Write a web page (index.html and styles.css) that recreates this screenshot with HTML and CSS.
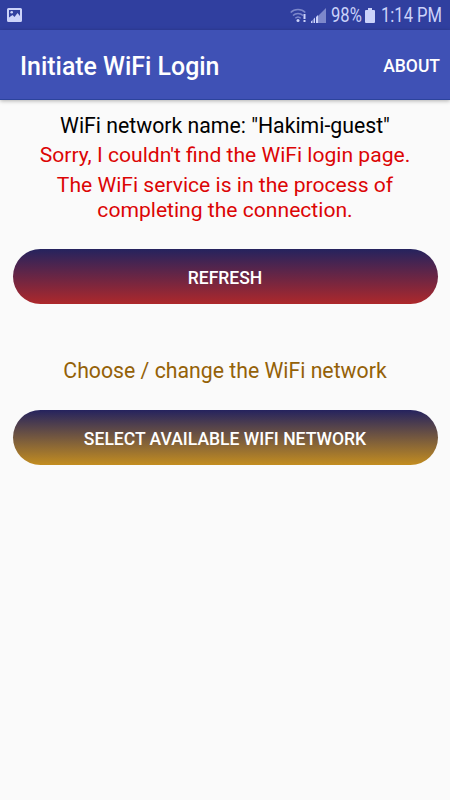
FILE: index.html
```html
<!DOCTYPE html>
<html lang="en">
<head>
    <meta charset="UTF-8">
    <meta name="viewport" content="width=device-width, initial-scale=1.0">
    <title>Initiate WiFi Login</title>
    <link rel="stylesheet" href="styles.css">
</head>
<body>
    <div class="status-bar">
        <svg class="picture-icon" width="15" height="14" viewBox="0 0 15 14">
            <path fill-rule="evenodd" d="M1.5 0h12A1.5 1.5 0 0 1 15 1.5v11a1.5 1.5 0 0 1-1.5 1.5h-12A1.5 1.5 0 0 1 0 12.5v-11A1.5 1.5 0 0 1 1.5 0zM2 2v7.5l3.5-2.5 2 2 3-4 2.5 3V2z"/>
            <circle cx="4.7" cy="4.3" r="1.3"/>
        </svg>
        <div class="status-icons">
            <svg class="wifi-icon" width="17" height="15" viewBox="0 0 17 15">
                <g class="wifi-waves">
                    <path d="M0.7 4.5C4.5 0.5 11.5 0.5 15.3 4.5"/>
                    <path d="M3 7.5c2.7-2.8 7.3-2.8 10 0"/>
                    <path d="M5.3 10.3c1.6-1.5 3.8-1.5 5.4 0"/>
                </g>
                <circle cx="8" cy="12.5" r="1.5"/>
                <path d="M13.5 6h2v5h-2zM13.5 12h2v2h-2z"/>
            </svg>
            <svg class="signal-icon" width="15" height="15" viewBox="0 0 15 15">
                <path class="signal-off" d="M15 0v15H7V8z"/>
                <path d="M0 15v-1.5L1.5 12v3zM2.5 15v-4L4 9.5V15zM5 15V9l2-2v8z"/>
            </svg>
            <span class="battery-level">98%</span>
            <svg class="battery-icon" width="10" height="15" viewBox="0 0 10 15">
                <path d="M3 0h4v2h2a1 1 0 0 1 1 1v11a1 1 0 0 1-1 1H1a1 1 0 0 1-1-1V3a1 1 0 0 1 1-1h2z"/>
            </svg>
            <span class="clock">1:14 PM</span>
        </div>
    </div>

    <div class="app-bar">
        <h1>Initiate WiFi Login</h1>
        <a href="#" class="about">ABOUT</a>
    </div>

    <div class="container">
        <p class="network-name">WiFi network name: "Hakimi-guest"</p>
        <p class="error">Sorry, I couldn't find the WiFi login page.</p>
        <p class="error">The WiFi service is in the process of<br>completing the connection.</p>
        <button class="refresh">REFRESH</button>
        <p class="choose">Choose / change the WiFi network</p>
        <button class="select">SELECT AVAILABLE WIFI NETWORK</button>
    </div>
</body>
</html>
```

FILE: styles.css
```css
* {
    margin: 0;
    padding: 0;
    box-sizing: border-box;
}

body {
    font-family: Roboto, sans-serif;
    background-color: #fafafa;
    min-height: 800px;
}

.status-bar {
    height: 30px;
    padding: 0 8px 0 7px;
    background: #303f9f;
    color: #ccd3fa;
    display: flex;
    align-items: center;
    justify-content: space-between;
}

.status-bar svg {
    fill: #ccd3fa;
    flex: none;
}

.status-icons {
    display: flex;
    align-items: center;
    font-size: 19.3px;
    line-height: 28px;
    white-space: nowrap;
}

.wifi-icon {
    margin-right: 4px;
}

.wifi-waves {
    fill: none;
    stroke: #7d88cb;
    stroke-width: 1.5;
}

.signal-icon {
    margin-right: 5px;
}

.signal-off {
    fill: #7d88cb;
}

/* narrow status bar lettering */
.battery-level,
.clock {
    padding-top: 2px;
    transform: scaleX(0.86);
    transform-origin: left;
}

.battery-level {
    width: 34px;
}

.battery-icon {
    margin-right: 6px;
}

.clock {
    width: 61px;
}

.app-bar {
    height: 70px;
    padding: 3px 10px 0 20px;
    background: #3f51b5;
    border-bottom: 1px solid #2c439c;
    box-shadow: 0 1px 4px rgba(0,0,0,0.3);
    display: flex;
    align-items: center;
    justify-content: space-between;
}

h1 {
    color: white;
    font-size: 24.9px;
    font-weight: 500;
}

.about {
    color: white;
    font-size: 17.5px;
    font-weight: 500;
    text-decoration: none;
}

.container {
    padding: 13px 12.5px;
    text-align: center;
    font-size: 21.25px;
    line-height: 25px;
}

.network-name {
    color: #000;
    margin-bottom: 4px;
}

.error {
    color: #dc0505;
    font-size: 21.1px;
    margin-bottom: 5px;
}

button {
    display: block;
    width: 100%;
    height: 55px;
    padding-top: 2px;
    border: none;
    border-radius: 28px;
    color: white;
    font-family: inherit;
    font-size: 17.55px;
    font-weight: 500;
    cursor: pointer;
}

.refresh {
    margin-top: 27px;
    background: linear-gradient(#25235e, #ad282b);
}

.choose {
    margin: 53.5px 0 27.5px;
    color: #946107;
}

.select {
    background: linear-gradient(#25235e, #c38d20);
}
```
